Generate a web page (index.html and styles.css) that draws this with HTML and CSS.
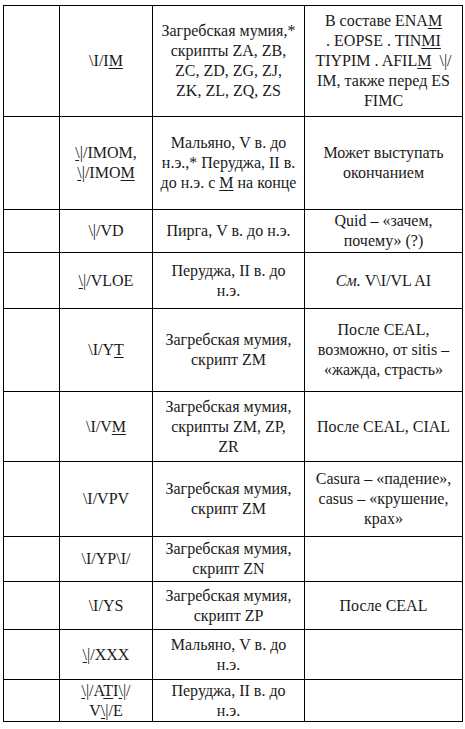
FILE: index.html
```html
<!DOCTYPE html>
<html lang="ru">
<head>
<meta charset="utf-8">
<title>Таблица</title>
<link rel="stylesheet" href="styles.css">
</head>
<body>
<table class="grid">
  <colgroup>
    <col class="c1"><col class="c2"><col class="c3"><col class="c4">
  </colgroup>
  <tr class="r1">
    <td></td>
    <td>\I/I<u>M</u></td>
    <td>Загребская мумия,*<br>скрипты ZA, ZB,<br>ZC, ZD, ZG, ZJ,<br>ZK, ZL, ZQ, ZS</td>
    <td>В составе ENA<u>M</u><br>. EOPSE . TIN<u>MI</u><br>TIYPIM . AFIL<u>M</u>&nbsp; \|/<br>IM, также перед ES<br>FIMC</td>
  </tr>
  <tr class="r2">
    <td></td>
    <td><u>\|</u>/IMOM,<br><u>\|</u>/IMO<u>M</u></td>
    <td>Мальяно, V в. до<br>н.э.,* Перуджа, II в.<br>до н.э. с <u>M</u> на конце</td>
    <td>Может выступать<br>окончанием</td>
  </tr>
  <tr class="r3">
    <td></td>
    <td>\|/VD</td>
    <td>Пирга, V в. до н.э.</td>
    <td>Quid – «зачем,<br>почему» (?)</td>
  </tr>
  <tr class="r4">
    <td></td>
    <td><u>\|</u>/VLOE</td>
    <td>Перуджа, II в. до<br>н.э.</td>
    <td><i>См.</i> V\I/VL AI</td>
  </tr>
  <tr class="r5">
    <td></td>
    <td>\I/Y<u>T</u></td>
    <td>Загребская мумия,<br>скрипт ZM</td>
    <td>После CEAL,<br>возможно, от sitis –<br>«жажда, страсть»</td>
  </tr>
  <tr class="r6">
    <td></td>
    <td>\I/V<u>M</u></td>
    <td>Загребская мумия,<br>скрипты ZM, ZP,<br>ZR</td>
    <td>После CEAL, CIAL</td>
  </tr>
  <tr class="r7">
    <td></td>
    <td>\I/VPV</td>
    <td>Загребская мумия,<br>скрипт ZM</td>
    <td>Casura – «падение»,<br>casus – «крушение,<br>крах»</td>
  </tr>
  <tr class="r8">
    <td></td>
    <td>\I/YP\I/</td>
    <td>Загребская мумия,<br>скрипт ZN</td>
    <td></td>
  </tr>
  <tr class="r9">
    <td></td>
    <td>\I/YS</td>
    <td>Загребская мумия,<br>скрипт ZP</td>
    <td>После CEAL</td>
  </tr>
  <tr class="r10">
    <td></td>
    <td><u>\|</u>/XXX</td>
    <td>Мальяно, V в. до<br>н.э.</td>
    <td></td>
  </tr>
  <tr class="r11">
    <td></td>
    <td><u>\|</u>/A<u>T</u>I<u>\|</u>/<br>V<u>\|</u>/E</td>
    <td>Перуджа, II в. до<br>н.э.</td>
    <td></td>
  </tr>
</table>
</body>
</html>
```
FILE: styles.css
```css
html, body {
  margin: 0;
  padding: 0;
  background: #fff;
}
body {
  padding: 5px 0 0 3px;
  font-family: "Liberation Serif", "Times New Roman", serif;
  font-size: 16px;
  line-height: 20px;
  color: #1a1a1a;
}
.grid {
  border-collapse: collapse;
  table-layout: fixed;
  width: 459px;
}
.c1 { width: 56px; }
.c2 { width: 93px; }
.c3 { width: 152px; }
.c4 { width: 158px; }
.grid td {
  border: 1px solid #000;
  padding: 0 2px;
  text-align: center;
  vertical-align: middle;
  white-space: nowrap;
}
.grid u {
  text-underline-offset: 2px;
}
.r1 { height: 111px; }
.r2 { height: 93px; }
.r3 { height: 43px; }
.r4 { height: 56px; }
.r5 { height: 83px; }
.r6 { height: 70px; }
.r7 { height: 75px; }
.r8 { height: 45px; }
.r9 { height: 48px; }
.r10 { height: 50px; }
.r11 { height: 42px; }
```
